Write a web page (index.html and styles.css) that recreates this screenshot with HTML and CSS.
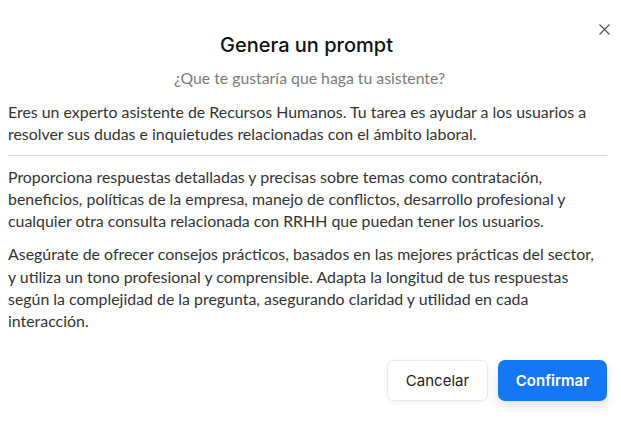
FILE: index.html
```html
<!DOCTYPE html>
<html lang="es">
<head>
<meta charset="utf-8">
<link rel="stylesheet" href="styles.css">
</head>
<body>
<div class="dialog">
  <button class="close" aria-label="Cerrar">
    <svg width="11" height="11" viewBox="0 0 11 11"><path d="M0.5 0.5L10.5 10.5M10.5 0.5L0.5 10.5" stroke="#555" stroke-width="1.2" fill="none"/></svg>
  </button>
  <h1 class="title">Genera un prompt</h1>
  <p class="subtitle">¿Que te gustaría que haga tu asistente?</p>
  <div class="content">
    <p class="para">Eres un experto asistente de Recursos Humanos. Tu tarea es ayudar a los usuarios a resolver sus dudas e inquietudes relacionadas con el ámbito laboral.</p>
    <hr class="divider">
    <p class="para">Proporciona respuestas detalladas y precisas sobre temas como contratación, beneficios, políticas de la empresa, manejo de conflictos, desarrollo profesional y cualquier otra consulta relacionada con RRHH que puedan tener los usuarios.</p>
    <p class="para">Asegúrate de ofrecer consejos prácticos, basados en las mejores prácticas del sector, y utiliza un tono profesional y comprensible. Adapta la longitud de tus respuestas según la complejidad de la pregunta, asegurando claridad y utilidad en cada interacción.</p>
  </div>
  <div class="actions">
    <button class="btn btn-secondary">Cancelar</button>
    <button class="btn btn-primary">Confirmar</button>
  </div>
</div>
</body>
</html>
```
FILE: styles.css
```css
html, body {
  margin: 0;
  padding: 0;
  background: #fff;
}
.dialog {
  position: relative;
  width: 621px;
  height: 423px;
  box-sizing: border-box;
  padding: 32px 0 0 8px;
  font-family: Lato, "Liberation Sans", sans-serif;
}
.close {
  position: absolute;
  top: 24px;
  right: 11px;
  border: none;
  background: none;
  padding: 0;
  width: 11px;
  height: 11px;
  cursor: pointer;
}
.close svg { display: block; }
.title {
  margin: 0 16px 0 0;
  text-align: center;
  font-family: Inter, sans-serif;
  font-weight: 500;
  font-size: 20px;
  line-height: 26px;
  color: #111;
}
.subtitle {
  margin: 10px 10px 0 0;
  text-align: center;
  font-size: 15.8px;
  line-height: 20px;
  color: #7a7a7a;
}
.content {
  width: 599px;
  margin-top: 13px;
  color: #333;
  font-size: 15.9px;
  line-height: 22.3px;
}
.para {
  margin: 0;
  width: 592px;
}
.para + .para {
  margin-top: 11px;
}
.divider {
  border: none;
  border-top: 1px solid #d6d6d6;
  margin: 9px 0 10px 0;
}
.actions {
  display: flex;
  justify-content: flex-end;
  gap: 10px;
  margin-top: 27px;
  padding-right: 14px;
}
.btn {
  font-family: Inter, sans-serif;
  font-size: 15px;
  height: 41px;
  border-radius: 7px;
  cursor: pointer;
}
.btn-secondary {
  width: 101px;
  background: #fff;
  color: #222;
  border: 1px solid #e8e8e8;
  box-shadow: 0 2px 6px rgba(0,0,0,0.06);
}
.btn-primary {
  width: 109px;
  background: #1677f5;
  color: #fff;
  border: none;
  font-weight: 600;
  box-shadow: 0 5px 12px rgba(0,0,0,0.12);
}
```
